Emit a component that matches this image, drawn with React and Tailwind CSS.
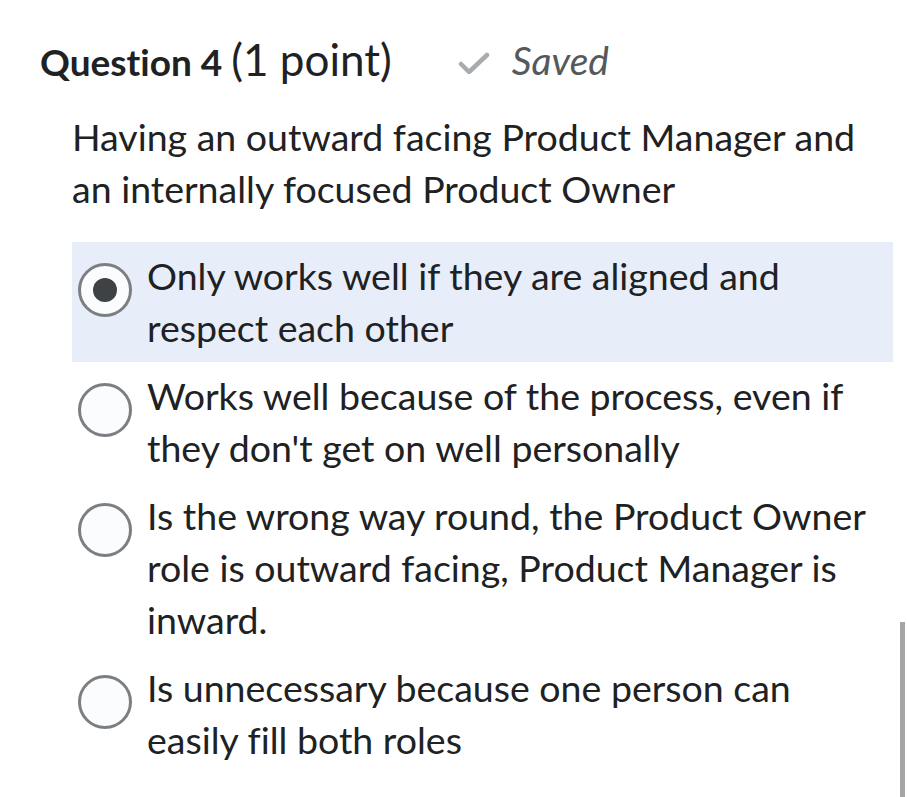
import React, { useState } from "react";

const options = [
    "Only works well if they are aligned and respect each other",
    "Works well because of the process, even if they don't get on well personally",
    "Is the wrong way round, the Product Owner role is outward facing, Product Manager is inward.",
    "Is unnecessary because one person can easily fill both roles",
];

const Radio = ({ checked }) => (
    <span className="mt-[13px] flex h-[54px] w-[54px] flex-shrink-0 items-center justify-center rounded-full border-[3px] border-[#7b7f82] bg-[#fbfcfe]">
        {checked && <span className="h-[24px] w-[24px] rounded-full bg-[#3f4244]" />}
    </span>
);

export default function App() {
    const [selected, setSelected] = useState(0);

    return (
        <div className="relative h-[797px] w-[907px] overflow-hidden bg-white pt-[31px] text-[#202122] font-['Lato',sans-serif] [font-variant-ligatures:none]">
            <div className="flex items-center pl-[40px]">
                <h2 className="leading-[52px]">
                    <span className="text-[37px] font-bold">Question 4</span>
                    <span className="ml-[9px] text-[44px]">(1 point)</span>
                </h2>
                <span className="mb-[8px] ml-[66px] flex items-center gap-[22px] text-[#56595c]">
                    <svg width="32" height="22" viewBox="0 0 32 22" fill="none" className="mt-[6px]">
                        <path d="M3 12l8 8L29 3" stroke="#a9acaf" strokeWidth="4.5" strokeLinecap="round" strokeLinejoin="round" />
                    </svg>
                    <span className="text-[39px] italic">Saved</span>
                </span>
            </div>

            <p className="mt-[13px] pl-[72px] pr-[40px] text-[37.5px] leading-[52px]">
                Having an outward facing Product Manager and
                <br />
                an internally focused Product Owner
            </p>

            <div className="mt-[27px] ml-[72px] mr-[14px]">
                {options.map((text, i) => (
                    <div
                        key={i}
                        onClick={() => setSelected(i)}
                        className={
                            "flex cursor-pointer gap-[15px] py-[8px] pl-[6px] pr-[24px] " +
                            (selected === i ? "bg-[#e8eef9]" : "")
                        }
                    >
                        <Radio checked={selected === i} />
                        <span className="text-[37.5px] leading-[52px]">{text}</span>
                    </div>
                ))}
            </div>

            <div className="absolute right-[2px] top-[622px] h-[175px] w-[5px] bg-[#a6a6a6]" />
        </div>
    );
}
